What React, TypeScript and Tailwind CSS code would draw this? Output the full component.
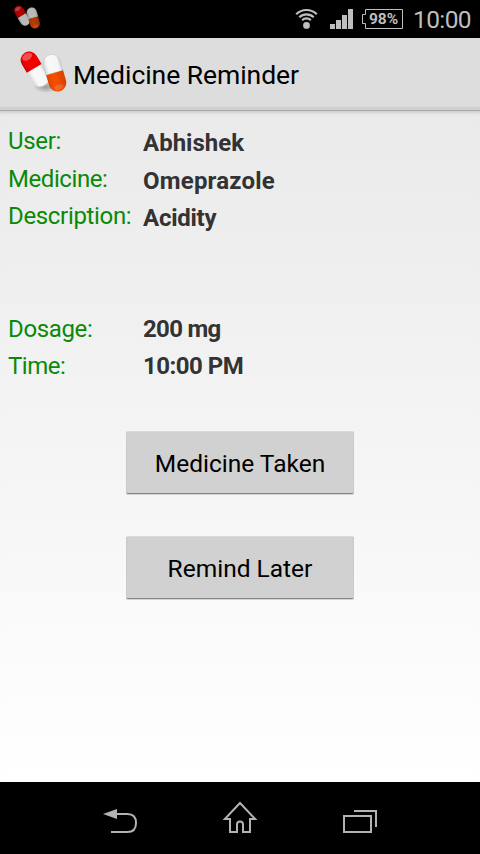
import type { ReactNode } from "react";

const FONT = "font-[Roboto,'Noto_Sans',sans-serif]";

type Field = { label: string; value: string; row: string; labelClass: string; valueClass: string };

const FIELDS: Field[] = [
  { label: "User:", value: "Abhishek", row: "h-[38px]", labelClass: "tracking-[-0.3px]", valueClass: "mt-[2px]" },
  { label: "Medicine:", value: "Omeprazole", row: "h-[37px]", labelClass: "tracking-[-0.42px]", valueClass: "mt-[2px] tracking-[0.2px]" },
  { label: "Description:", value: "Acidity", row: "h-[113px]", labelClass: "tracking-[-0.33px]", valueClass: "mt-[2px] tracking-[-0.25px]" },
  { label: "Dosage:", value: "200 mg", row: "h-[37px]", labelClass: "tracking-[-0.35px]", valueClass: "tracking-[-0.7px]" },
  { label: "Time:", value: "10:00 PM", row: "h-[37px]", labelClass: "tracking-[-0.5px]", valueClass: "tracking-[-0.5px]" },
];

function Pills({ id, className }: { id: string; className: string }) {
  return (
    <svg viewBox="19 50 49 46" className={className} aria-hidden>
      <defs>
        <linearGradient id={`${id}-red`}>
          <stop offset="0" stopColor="#cc0000" />
          <stop offset=".3" stopColor="#f00404" />
          <stop offset="1" stopColor="#ea0000" />
        </linearGradient>
        <linearGradient id={`${id}-white`}>
          <stop offset="0" stopColor="#d8d8d8" />
          <stop offset=".25" stopColor="#f8f8f8" />
          <stop offset=".8" stopColor="#f6f6f6" />
          <stop offset="1" stopColor="#d0d0d0" />
        </linearGradient>
        <linearGradient id={`${id}-orange`}>
          <stop offset="0" stopColor="#e04400" />
          <stop offset=".4" stopColor="#f85000" />
          <stop offset="1" stopColor="#d84000" />
        </linearGradient>
        <radialGradient id={`${id}-shadow`}>
          <stop offset="0" stopColor="#000" stopOpacity=".3" />
          <stop offset="1" stopColor="#000" stopOpacity="0" />
        </radialGradient>
      </defs>
      <ellipse cx="46" cy="87" rx="13" ry="6" fill={`url(#${id}-shadow)`} />
      <g transform="translate(34.2 68.4) rotate(-31)">
        <path d="M-8.6 0V11.2a8.6 8.6 0 0 0 17.2 0V0Z" fill={`url(#${id}-white)`} />
        <path d="M-8.6 0V-9.6a8.6 8.6 0 0 1 17.2 0V0Z" fill={`url(#${id}-red)`} />
        <ellipse cx="0" cy="-13.6" rx="5.4" ry="3.4" fill="#fff" opacity=".3" />
      </g>
      <g transform="translate(54.6 72.8) rotate(-16)">
        <path d="M-8.8 0V-10a8.8 8.8 0 0 1 17.6 0V0Z" fill={`url(#${id}-white)`} stroke="#bcbcbc" strokeWidth=".5" />
        <path d="M-8.8 0V10.4a8.8 8.8 0 0 0 17.6 0V0Z" fill={`url(#${id}-orange)`} />
        <ellipse cx="0" cy="15" rx="5" ry="2.6" fill="#fff" opacity=".15" />
      </g>
    </svg>
  );
}

function StatusBar() {
  return (
    <div className="flex h-[38px] shrink-0 items-start bg-black text-[#bebebe]">
      <Pills id="status" className="mt-[5px] ml-[13px] h-[26px] w-[28px] opacity-75" />
      <svg viewBox="0 0 24 22" className="mt-[7px] ml-[254px] h-[22px] w-[24px]" fill="none" stroke="currentColor" strokeWidth="2.2" aria-hidden>
        <path d="M1.2 7.3a14.5 14.5 0 0 1 20.6 0" />
        <path d="M4.3 10.3a10.2 10.2 0 0 1 14.4 0" />
        <path d="M7.2 13.2a6 6 0 0 1 8.6 0" />
        <circle cx="11.5" cy="18.4" r="3.4" fill="currentColor" stroke="none" />
      </svg>
      <svg viewBox="0 0 23 20" className="mt-[9px] ml-[11px] h-[20px] w-[23px]" fill="currentColor" aria-hidden>
        <path d="M0 15h5v5H0zM6 11h5v9H6zM12 6h5v14h-5zM18 0h5v20h-5z" />
      </svg>
      <div className="relative mt-[9px] ml-[9px] h-[20px] w-[41px]">
        <svg viewBox="0 0 41 20" className="h-[20px] w-[41px]" fill="none" stroke="currentColor" aria-hidden>
          <path d="M3.5 .5H40.5V19.5H3.5V14.5H.5V5.5H3.5Z" />
        </svg>
        <span className="absolute inset-0 pl-[2px] text-center text-[15.5px] leading-[20px] font-bold">98%</span>
      </div>
      <span className="mt-[5px] ml-[10px] text-[24.5px] leading-[30px] tracking-[-0.6px] whitespace-nowrap">10:00</span>
    </div>
  );
}

function ActionButton({ children }: { children: ReactNode }) {
  return (
    <button className="h-[63px] w-[228px] rounded-[2px] border border-t-[#dadada] border-r-[#cacaca] border-b-[#858585] border-l-[#cacaca] bg-[#d1d1d1] pt-[4px] text-[24.5px] text-black shadow-[0_1px_0_#d4d4d4]">
      {children}
    </button>
  );
}

export default function App() {
  return (
    <div className={`flex h-[854px] w-[480px] flex-col overflow-hidden ${FONT}`}>
      <StatusBar />
      <header className="flex h-[73px] shrink-0 border-b border-[#a9a9a9] bg-[#dddddd] shadow-[inset_0_-3px_0_#d0d0d0]">
        <Pills id="header" className="mt-[12px] ml-[19px] h-[46px] w-[49px]" />
        <h1 className="mt-[21px] ml-[5px] text-[26.5px] leading-[32px] tracking-[-0.05px] text-black">Medicine Reminder</h1>
      </header>
      <main className="flex h-[671px] flex-col bg-linear-to-b from-[#eaeaea] to-white shadow-[inset_0_4px_3px_-2px_#cfcfcf]">
        <dl className="pt-[15px] pl-[8px] text-[24px] leading-[30px]">
          {FIELDS.map((f) => (
            <div key={f.label} className={`flex ${f.row}`}>
              <dt className={`w-[135px] whitespace-nowrap text-[#088a08] ${f.labelClass}`}>{f.label}</dt>
              <dd className={`font-bold whitespace-nowrap text-[#333333] ${f.valueClass}`}>{f.value}</dd>
            </div>
          ))}
        </dl>
        <div className="mt-[43px] flex flex-col items-center gap-[42px]">
          <ActionButton>Medicine Taken</ActionButton>
          <ActionButton>Remind Later</ActionButton>
        </div>
      </main>
      <nav className="h-[72px] shrink-0 bg-black text-[#b3b3b3]">
        <div className="flex pt-[19px] pl-[103px]">
          <svg viewBox="0 0 35 34" className="h-[34px] w-[35px]" fill="none" stroke="currentColor" strokeWidth="2" aria-hidden>
            <path d="M12 13H24.5C30 13 33 16.5 33 22S30 31 24.5 31H8" />
            <path d="M0 13 14 8V18Z" fill="currentColor" stroke="none" />
          </svg>
          <svg viewBox="0 0 34 34" className="ml-[85px] h-[34px] w-[34px]" fill="none" stroke="currentColor" strokeWidth="2" aria-hidden>
            <path d="M17 2 1.8 18H7V31H14V23.5a3 3 0 0 1 6 0V31H27V18H32.2Z" />
          </svg>
          <svg viewBox="0 0 35 34" className="ml-[85px] h-[34px] w-[35px]" fill="none" stroke="currentColor" strokeWidth="2" aria-hidden>
            <path d="M2 15H29V31H2Z" />
            <path d="M12 10H34V26" />
          </svg>
        </div>
      </nav>
    </div>
  );
}
